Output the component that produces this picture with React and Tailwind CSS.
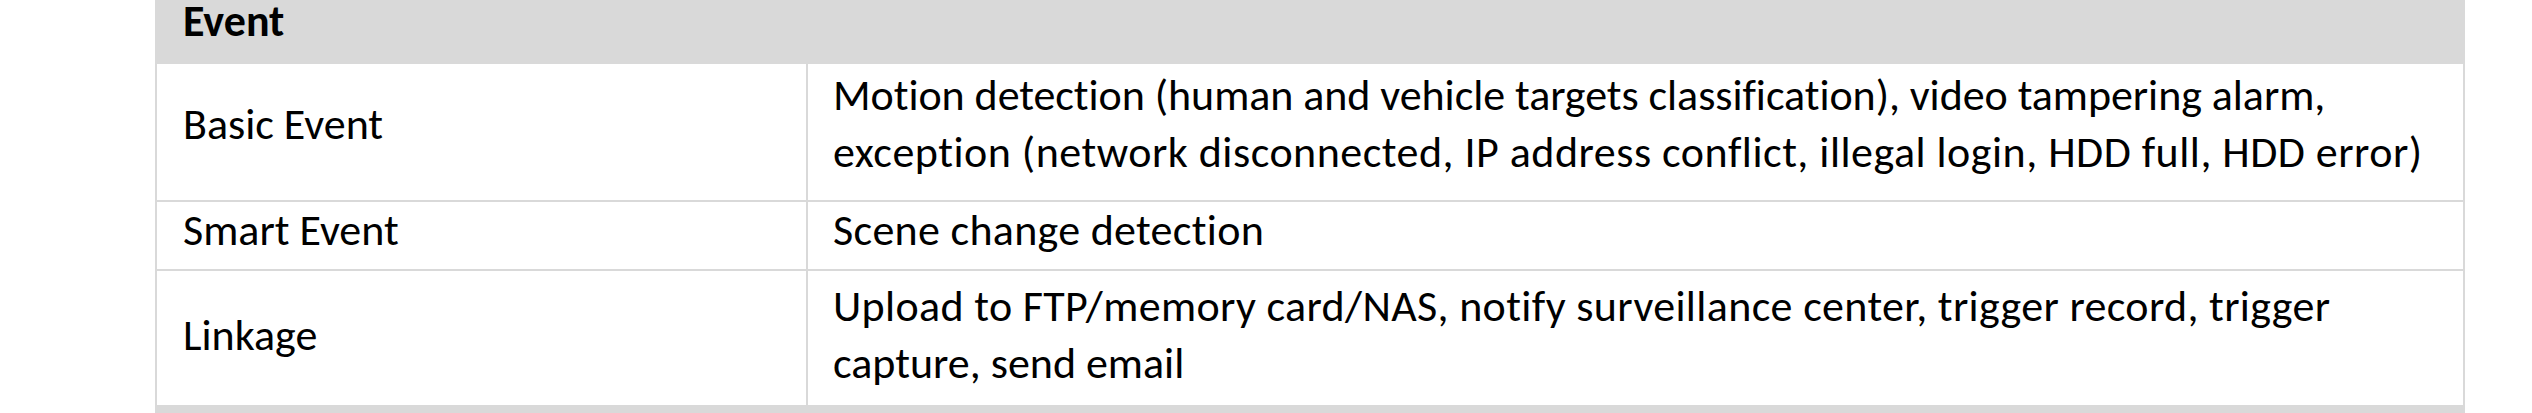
const rows = [
  {
    name: 'Basic Event',
    lines: [
      ['Motion detection (human and vehicle targets classification), video tampering alarm,', 'tracking-[-0.05px]'],
      ['exception (network disconnected, IP address conflict, illegal login, HDD full, HDD error)', 'tracking-[0.5px]'],
    ],
    h: 'h-[138px]',
    left: 'pb-[16px] items-center',
    right: 'pb-[16px] justify-center',
  },
  {
    name: 'Smart Event',
    lines: [['Scene change detection', 'tracking-[0.3px]']],
    h: 'h-[69px]',
    left: 'items-start',
    right: 'justify-start',
  },
  {
    name: 'Linkage',
    lines: [
      ['Upload to FTP/memory card/NAS, notify surveillance center, trigger record, trigger', 'tracking-[0.35px]'],
      ['capture, send email', 'tracking-[0px]'],
    ],
    h: 'h-[136px]',
    left: 'pb-[6px] items-center',
    right: 'pb-[6px] justify-center',
  },
]

export default function App() {
  return (
    <div className="w-[2532px] h-[413px] overflow-hidden bg-white pl-[155px] font-['Carlito','Open_Sans',sans-serif] text-black [font-variant-ligatures:none]">
      <div className="w-[2310px] border-l-2 border-r-2 border-[#d9d9d9]">
        <div className="h-[62px] bg-[#d9d9d9] flex items-center px-[26px] pb-[20px] text-[44px] font-bold leading-[40px]">
          Event
        </div>
        {rows.map((row) => (
          <div key={row.name} className={`grid grid-cols-[651px_1fr] border-t-2 border-[#d9d9d9] ${row.h}`}>
            <div className={`flex px-[26px] text-[44px] leading-[57px] border-r-2 border-[#d9d9d9] ${row.left}`}>
              {row.name}
            </div>
            <div className={`flex flex-col items-start px-[25px] text-[44px] leading-[57px] ${row.right}`}>
              {row.lines.map(([l, t]) => (
                <span key={l} className={`whitespace-nowrap ${t}`}>{l}</span>
              ))}
            </div>
          </div>
        ))}
        <div className="h-[20px] bg-[#d9d9d9] border-t-2 border-[#d9d9d9]" />
      </div>
    </div>
  )
}
